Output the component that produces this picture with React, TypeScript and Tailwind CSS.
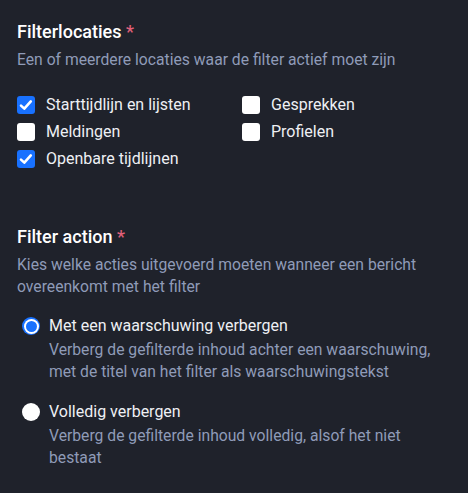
import React from 'react';

const BLUE = 'bg-[#1871ff]';

const Checkbox = ({ checked, label }: { checked: boolean; label: string }) => (
  <label className="flex items-center h-[27px] gap-[11px]">
    {checked ? (
      <span className={`w-[18px] h-[18px] rounded-[3px] ${BLUE} flex`}>
        <svg width="18" height="18" viewBox="0 0 18 18" fill="none">
          <path d="M4 9.6 L7.3 12.6 L13.8 5.4" stroke="white" strokeWidth="2.6" strokeLinecap="round" strokeLinejoin="round" />
        </svg>
      </span>
    ) : (
      <span className="w-[18px] h-[18px] rounded-[3px] bg-white" />
    )}
    <span className="text-[16px] text-[#eef0f4]">{label}</span>
  </label>
);

const Radio = ({ checked, label, hint, className }: { checked: boolean; label: string; hint: string; className?: string }) => (
  <div className={`flex pl-[5px] gap-[9px] ${className ?? ''}`}>
    <div className="h-[22px] flex items-center">
      {checked ? (
        <span className={`w-[18px] h-[18px] rounded-full ${BLUE} p-[1.5px] flex`}>
          <span className="flex-1 rounded-full bg-white p-[2px] flex">
            <span className={`flex-1 rounded-full ${BLUE}`} />
          </span>
        </span>
      ) : (
        <span className="w-[18px] h-[18px] rounded-full bg-white" />
      )}
    </div>
    <div>
      <div className="text-[16px] leading-[22px] text-[#eef0f4]">{label}</div>
      <div className="mt-[2px] text-[15.7px] leading-[22px] text-[#8f9bb8] pr-[10px]">{hint}</div>
    </div>
  </div>
);

export default function App() {
  return (
    <div className="min-h-screen bg-[#1f222b] px-[17px] pt-[20px] font-['Roboto',sans-serif]">
      <section>
        <h2 className="text-[18px] leading-[24px] font-medium text-white">
          Filterlocaties <span className="text-[#e0607a]">*</span>
        </h2>
        <p className="mt-[5px] text-[15.7px] leading-[22px] text-[#8f9bb8]">
          Een of meerdere locaties waar de filter actief moet zijn
        </p>
        <div className="mt-[20px] grid grid-cols-[225px_1fr]">
          <Checkbox checked label="Starttijdlijn en lijsten" />
          <Checkbox checked={false} label="Gesprekken" />
          <Checkbox checked={false} label="Meldingen" />
          <Checkbox checked={false} label="Profielen" />
          <Checkbox checked label="Openbare tijdlijnen" />
        </div>
      </section>

      <section className="mt-[53px]">
        <h2 className="text-[18px] leading-[24px] font-medium text-white">
          Filter action <span className="text-[#e0607a]">*</span>
        </h2>
        <p className="mt-[5px] text-[15.7px] leading-[22px] text-[#8f9bb8] pr-[10px]">
          Kies welke acties uitgevoerd moeten wanneer een bericht overeenkomt met het filter
        </p>
        <div className="mt-[17px]">
          <Radio
            checked
            label="Met een waarschuwing verbergen"
            hint="Verberg de gefilterde inhoud achter een waarschuwing, met de titel van het filter als waarschuwingstekst"
          />
          <Radio
            className="mt-[18px]"
            checked={false}
            label="Volledig verbergen"
            hint="Verberg de gefilterde inhoud volledig, alsof het niet bestaat"
          />
        </div>
      </section>
    </div>
  );
}
